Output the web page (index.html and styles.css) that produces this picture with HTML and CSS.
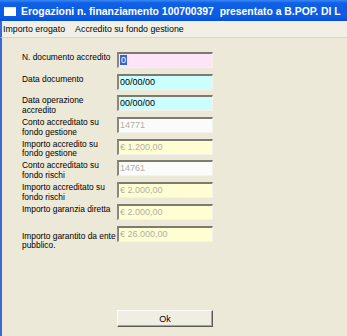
FILE: index.html
```html
<!DOCTYPE html>
<html>
<head>
<meta charset="utf-8">
<link rel="stylesheet" href="styles.css">
</head>
<body>
<div class="window">
  <div class="titlebar">
    <svg class="appicon" width="12" height="9" viewBox="0 0 12 9"><rect x="0" y="0" width="12" height="9" fill="#ffffff"/><rect x="0" y="0" width="12" height="1" fill="#dfe8fb"/></svg>
    <span class="title">Erogazioni n. finanziamento 100700397&nbsp; presentato a B.POP. DI L</span>
  </div>
  <div class="menubar">
    <span class="menuitem">Importo erogato</span>
    <span class="menuitem">Accredito su fondo gestione</span>
  </div>
  <div class="body">
    <div class="form">
      <label class="lbl">N. documento accredito</label>
      <div class="field pink"><span class="sel">0</span></div>

      <label class="lbl">Data documento</label>
      <div class="field cyan">00/00/00</div>

      <label class="lbl">Data operazione<br>accredito</label>
      <div class="field cyan">00/00/00</div>

      <label class="lbl">Conto accreditato su<br>fondo gestione</label>
      <div class="field white dis">14771</div>

      <label class="lbl">Importo accredito su<br>fondo gestione</label>
      <div class="field yellow dis">€ 1.200,00</div>

      <label class="lbl">Conto accreditato su<br>fondo rischi</label>
      <div class="field white dis">14761</div>

      <label class="lbl">Importo accreditato su<br>fondo rischi</label>
      <div class="field yellow dis">€ 2.000,00</div>

      <label class="lbl">Importo garanzia diretta</label>
      <div class="field yellow dis">€ 2.000,00</div>

      <label class="lbl low">Importo garantito da ente<br>pubblico.</label>
      <div class="field yellow dis">€ 26.000,00</div>
    </div>
    <div class="actions">
      <button class="btn">Ok</button>
    </div>
  </div>
</div>
</body>
</html>
```
FILE: styles.css
```css
html, body {
  margin: 0;
  padding: 0;
  background: #ece9d8;
}
.window {
  width: 347px;
  height: 336px;
  overflow: hidden;
  display: flex;
  flex-direction: column;
  font-family: "Liberation Sans", Arial, sans-serif;
  background: #ece9d8;
}
.titlebar {
  height: 21px;
  flex: none;
  display: flex;
  align-items: center;
  gap: 5px;
  padding-left: 4px;
  background: linear-gradient(to bottom, #3b87f2 0px, #0f60e6 3px, #0b5be3 17px, #0550d6 21px);
  overflow: hidden;
  white-space: nowrap;
}
.appicon {
  flex: none;
  margin-top: 2px;
}
.title {
  color: #ffffff;
  font-weight: bold;
  font-size: 10.4px;
  margin-top: 2px;
}
.menubar {
  height: 16px;
  flex: none;
  display: flex;
  align-items: center;
  gap: 10px;
  padding-left: 1px;
  background: #f2f0e6;
  border-left: 2px solid #3a68d2;
  border-bottom: 1px solid #d9d5c6;
  font-size: 8.8px;
  color: #000;
}
.body {
  flex: 1;
  border-left: 2px solid #3a68d2;
  padding: 14px 0 0 20px;
  display: flex;
  flex-direction: column;
}
.form {
  display: grid;
  grid-template-columns: 95px 96px;
  grid-auto-rows: 16px;
  row-gap: 5.7px;
}
.lbl {
  font-size: 8.4px;
  line-height: 9.5px;
  color: #000;
  white-space: nowrap;
  padding-top: 1px;
}
.lbl.low {
  padding-top: 6px;
}
.field {
  box-sizing: border-box;
  height: 16px;
  border-top: 2px solid #7d7a70;
  border-left: 2px solid #8a877c;
  border-right: 1px solid #f4f2ea;
  border-bottom: 1px solid #f4f2ea;
  font-size: 9px;
  line-height: 12px;
  padding-left: 1px;
  color: #000;
  white-space: nowrap;
  overflow: hidden;
}
.pink { background: #fde4f8; }
.cyan { background: #ccfeff; }
.white { background: #fbfbfa; }
.yellow { background: #fffed2; }
.dis { color: #b0b0a6; }
.sel {
  display: inline-block;
  background: #3566c8;
  color: #ffffff;
  line-height: 10px;
  padding: 0 1px;
  margin-top: 1px;
  vertical-align: top;
}
.actions {
  padding-left: 95px;
  margin-top: 66px;
}
.btn {
  box-sizing: border-box;
  width: 96px;
  height: 17px;
  background: #f0eee3;
  border-top: 1px solid #ffffff;
  border-left: 1px solid #ffffff;
  border-right: 1px solid #5e5c55;
  border-bottom: 1px solid #5e5c55;
  box-shadow: inset -1px -1px 0 #a8a598;
  font-family: "Liberation Sans", Arial, sans-serif;
  font-size: 9px;
  color: #000;
  padding: 0;
  margin: 0;
}
```
